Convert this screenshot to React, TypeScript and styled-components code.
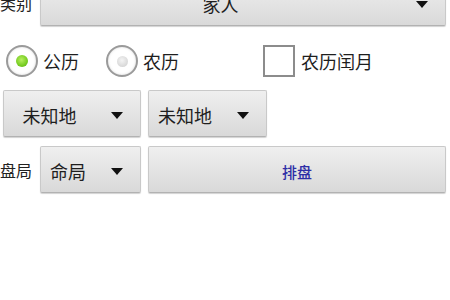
import React from "react";
import styled, { createGlobalStyle } from "styled-components";

const Global = createGlobalStyle`
  html, body { margin: 0; padding: 0; background: #ffffff; }
  body { font-family: "Noto Sans CJK SC", "Noto Sans", sans-serif; color: #222; overflow: hidden; }
`;

const Page = styled.div`
  width: 450px;
  height: 300px;
  display: flex;
  flex-direction: column;
  overflow: hidden;
`;

const Row = styled.div<{ $top: number; $h: number; $pl?: number; $gap?: number }>`
  display: flex;
  align-items: center;
  margin-top: ${(p) => p.$top}px;
  height: ${(p) => p.$h}px;
  padding-left: ${(p) => p.$pl ?? 0}px;
  gap: ${(p) => p.$gap ?? 0}px;
  flex-shrink: 0;
`;

const Label = styled.div`
  width: 40px;
  font-size: 16px;
  line-height: 1;
  color: #222;
  flex-shrink: 0;
  white-space: nowrap;
`;

const ButtonBase = styled.div<{ $w?: number; $mr?: number; $ml?: number }>`
  box-sizing: border-box;
  height: 100%;
  ${(p) => (p.$w ? `width: ${p.$w}px; flex-shrink: 0;` : "flex: 1;")}
  margin-right: ${(p) => p.$mr ?? 0}px;
  margin-left: ${(p) => p.$ml ?? 0}px;
  padding-top: 3px;
  border: 1px solid #c9c9c9;
  border-bottom-color: #b2b2b2;
  border-radius: 2px;
  background: linear-gradient(#efefef, #e2e2e2 60%, #d9d9d9);
  box-shadow: 0 1px 1px rgba(0, 0, 0, 0.18);
  display: flex;
  align-items: center;
`;

const SpinnerText = styled.div`
  flex: 1;
  text-align: center;
  font-size: 18px;
  line-height: 1;
  color: #1e1e1e;
  white-space: nowrap;
`;

const ArrowBox = styled.div`
  width: 45px;
  display: flex;
  justify-content: flex-end;
  padding-right: 17px;
  box-sizing: border-box;
  flex-shrink: 0;
`;

const Triangle = styled.div`
  width: 0;
  height: 0;
  border-left: 6px solid transparent;
  border-right: 6px solid transparent;
  border-top: 7px solid #111;
`;

const ActionText = styled.div`
  flex: 1;
  text-align: center;
  font-size: 15px;
  font-weight: 500;
  color: #2e2ea6;
  line-height: 1;
`;

const Option = styled.div<{ $ml: number; $gap?: number }>`
  display: flex;
  align-items: center;
  gap: ${(p) => p.$gap ?? 5}px;
  margin-left: ${(p) => p.$ml}px;
  font-size: 18px;
  line-height: 1;
  color: #1e1e1e;
`;

const RadioCircle = styled.div<{ $on: boolean }>`
  box-sizing: border-box;
  width: 32px;
  height: 32px;
  border-radius: 50%;
  border: 2px solid #9a9a9a;
  background: radial-gradient(circle, #ffffff 55%, #f0f0f0 100%);
  box-shadow: inset 0 0 2px rgba(0, 0, 0, 0.15);
  display: flex;
  align-items: center;
  justify-content: center;
  &::after {
    content: "";
    width: ${(p) => (p.$on ? 12 : 11)}px;
    height: ${(p) => (p.$on ? 12 : 11)}px;
    border-radius: 50%;
    background: ${(p) =>
      p.$on
        ? "radial-gradient(circle at 45% 40%, #b8f060, #77cc22 60%, #5aa818)"
        : "radial-gradient(circle at 45% 40%, #f4f4f4, #d8d8d8 70%, #c8c8c8)"};
  }
`;

const CheckSquare = styled.div`
  box-sizing: border-box;
  width: 32px;
  height: 32px;
  border: 2px solid #8c8c8c;
  background: #fff;
`;

function Spinner({ text, w, mr }: { text: string; w?: number; mr?: number }) {
  return (
    <ButtonBase $w={w} $mr={mr}>
      <SpinnerText>{text}</SpinnerText>
      <ArrowBox>
        <Triangle />
      </ArrowBox>
    </ButtonBase>
  );
}

export default function App() {
  return (
    <Page>
      <Global />
      <Row $top={-21} $h={47}>
        <Label>类别</Label>
        <Spinner text="家人" mr={4} />
      </Row>
      <Row $top={18} $h={34}>
        <Option $ml={6}>
          <RadioCircle $on={true} />
          <span>公历</span>
        </Option>
        <Option $ml={27}>
          <RadioCircle $on={false} />
          <span>农历</span>
        </Option>
        <Option $ml={84} $gap={6}>
          <CheckSquare />
          <span>农历闰月</span>
        </Option>
      </Row>
      <Row $top={12} $h={47} $pl={3} $gap={7}>
        <Spinner text="未知地" w={138} />
        <Spinner text="未知地" w={119} />
      </Row>
      <Row $top={9} $h={47}>
        <Label>盘局</Label>
        <Spinner text="命局" w={101} />
        <ButtonBase $mr={4} $ml={7}>
          <ActionText>排盘</ActionText>
        </ButtonBase>
      </Row>
    </Page>
  );
}
